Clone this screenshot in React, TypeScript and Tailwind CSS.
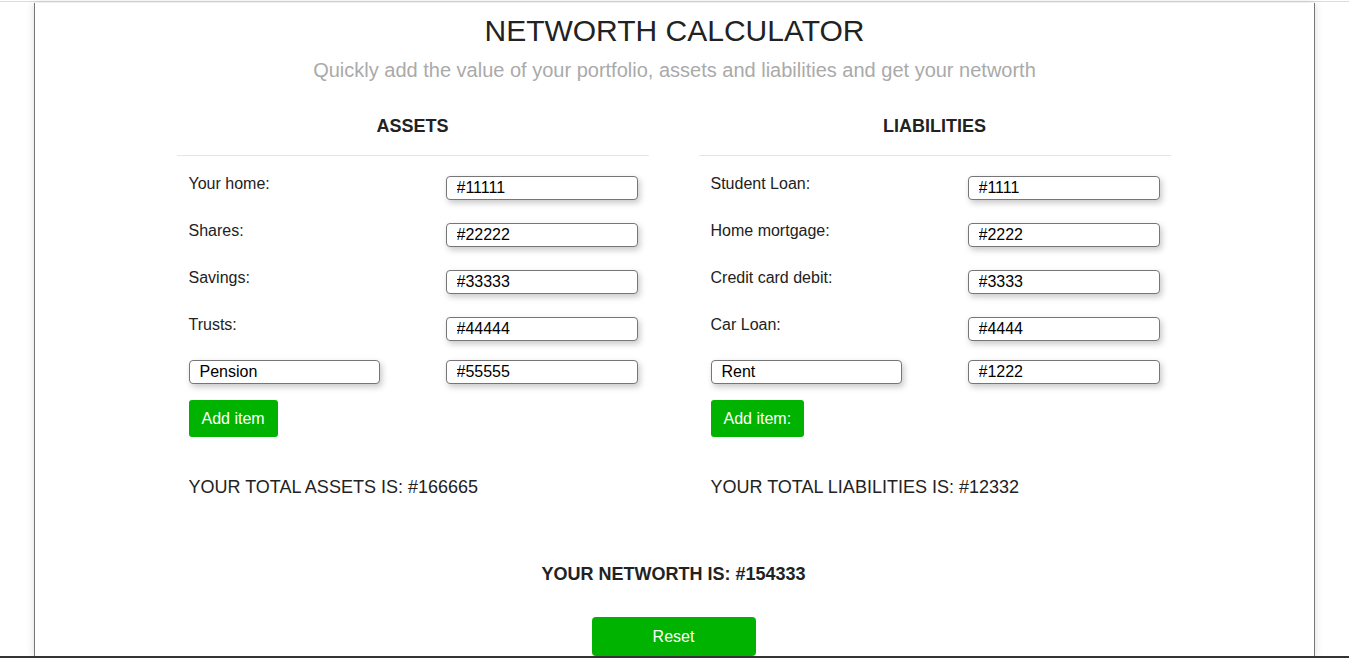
const assets = [
  { label: "Your home:", value: "#11111" },
  { label: "Shares:", value: "#22222" },
  { label: "Savings:", value: "#33333" },
  { label: "Trusts:", value: "#44444" },
];

const liabilities = [
  { label: "Student Loan:", value: "#1111" },
  { label: "Home mortgage:", value: "#2222" },
  { label: "Credit card debit:", value: "#3333" },
  { label: "Car Loan:", value: "#4444" },
];

const inputCls =
  "h-[24px] border border-[#767676] rounded-[4px] pl-[10px] text-[16px] text-black bg-white shadow-[2px_3px_6px_rgba(0,0,0,0.22)] outline-none";

interface ColumnProps {
  title: string;
  rows: { label: string; value: string }[];
  extraName: string;
  extraValue: string;
  button: string;
  total: string;
}

function Column({ title, rows, extraName, extraValue, button, total }: ColumnProps) {
  return (
    <div className="w-[472px]">
      <h2 className="text-center font-bold text-[18px] leading-[20px] text-[#222]">{title}</h2>
      <div className="mt-[19px] h-px bg-[#e5e5e5]" />
      <div className="pl-[12px] pr-[11px] pt-[20px]">
        <div className="flex flex-col gap-[23px]">
          {rows.map((r) => (
            <div key={r.label} className="flex justify-between items-start">
              <span className="text-[16px] leading-[18px] text-[#222] -mt-px">{r.label}</span>
              <input className={"w-[192px] " + inputCls} defaultValue={r.value} />
            </div>
          ))}
        </div>
        <div className="flex justify-between mt-[19px]">
          <input className={"w-[191px] " + inputCls} defaultValue={extraName} />
          <input className={"w-[192px] " + inputCls} defaultValue={extraValue} />
        </div>
        <button className="mt-[16px] h-[37px] px-[13px] bg-[#00b300] text-white text-[16px] rounded-[3px]">
          {button}
        </button>
        <p className="mt-[40px] text-[18px] leading-[21px] text-[#222]">{total}</p>
      </div>
    </div>
  );
}

export default function App() {
  return (
    <div className="bg-white min-h-screen" style={{ fontFamily: '"Liberation Sans", Arial, sans-serif' }}>
      <div className="h-[2px] border-t border-[#dcdcdc] mt-px" />
      <div className="mx-[34px] border-x border-[#777] bg-white shadow-[0_0_8px_rgba(0,0,0,0.15)]">
        <h1 className="pt-[11px] text-center text-[30px] leading-[34px] text-[#222]">NETWORTH CALCULATOR</h1>
        <p className="mt-[11px] text-center text-[20px] leading-[23px] text-[#aaa]">
          Quickly add the value of your portfolio, assets and liabilities and get your networth
        </p>
        <div className="mt-[34px] pr-[2px] flex justify-center gap-[50px]">
          <Column
            title="ASSETS"
            rows={assets}
            extraName="Pension"
            extraValue="#55555"
            button="Add item"
            total="YOUR TOTAL ASSETS IS: #166665"
          />
          <Column
            title="LIABILITIES"
            rows={liabilities}
            extraName="Rent"
            extraValue="#1222"
            button="Add item:"
            total="YOUR TOTAL LIABILITIES IS: #12332"
          />
        </div>
        <p className="mt-[66px] pr-[2px] text-center font-bold text-[18px] leading-[20px] text-[#222]">
          YOUR NETWORTH IS: #154333
        </p>
        <div className="flex justify-center mt-[33px] pr-[2px]">
          <button className="w-[164px] h-[39px] bg-[#00b300] text-white text-[16px] rounded-[4px]">Reset</button>
        </div>
      </div>
      <div className="h-[2px] bg-[#333]" />
    </div>
  );
}
